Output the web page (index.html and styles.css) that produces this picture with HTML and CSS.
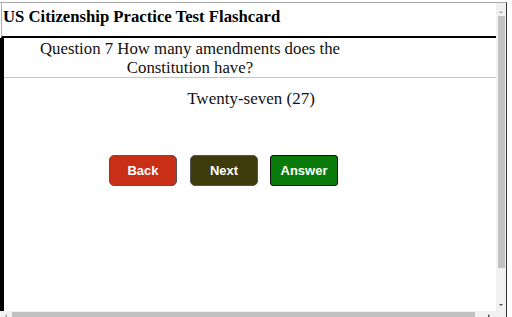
FILE: index.html
```html
<!DOCTYPE html>
<html>
<head>
<meta charset="utf-8">
<title>US Citizenship Practice Test Flashcard</title>
<link rel="stylesheet" href="styles.css">
</head>
<body>
<div class="frame">
  <div class="viewport">
    <header class="header">US Citizenship Practice Test Flashcard</header>
    <main class="card">
      <div class="question">Question 7 How many amendments does the Constitution have?</div>
      <div class="answer">Twenty-seven (27)</div>
      <div class="buttons">
        <button class="btn btn-back">Back</button>
        <button class="btn btn-next">Next</button>
        <button class="btn btn-answer">Answer</button>
      </div>
    </main>
  </div>
  <div class="vscroll">
    <span class="arrow arrow-up"></span>
    <span class="vthumb"></span>
    <span class="arrow arrow-down"></span>
  </div>
  <div class="hscroll">
    <span class="arrow arrow-left"></span>
    <span class="hthumb"></span>
    <span class="arrow arrow-right"></span>
  </div>
  <div class="corner"></div>
</div>
</body>
</html>
```
FILE: styles.css
```css
html, body {
  margin: 0;
  padding: 0;
  background: #fff;
  overflow: hidden;
  width: 512px;
  height: 317px;
}
.frame {
  margin-top: 2px;
  width: 507px;
  height: 320px;
  display: grid;
  grid-template-columns: 496px 10px;
  grid-template-rows: 308px 10px;
  border-top: 1px solid #a8a8a8;
  border-right: 1px solid #333;
  box-sizing: border-box;
}
.viewport {
  display: flex;
  flex-direction: column;
  overflow: hidden;
}
.header {
  height: 33px;
  margin-left: 1px;
  border-left: 1px solid #b0b0b0;
  padding-left: 1px;
  font-family: "Liberation Serif", "Times New Roman", serif;
  font-weight: bold;
  font-size: 16.7px;
  line-height: 27px;
  color: #000;
  border-bottom: 2px solid #000;
}
.card {
  flex: 1;
  border-left: 4px solid #000;
  font-family: "Liberation Serif", "Times New Roman", serif;
  color: #111;
}
.question {
  text-align: center;
  font-size: 16.8px;
  line-height: 19px;
  padding-top: 1px;
  height: 38px;
  border-bottom: 1px solid #c4c4c4;
  padding-right: 120px;
}
.answer {
  text-align: center;
  font-size: 17px;
  line-height: 20px;
  padding-top: 11px;
  padding-left: 2px;
}
.buttons {
  display: flex;
  gap: 13px;
  padding-left: 105px;
  margin-top: 46px;
}
.btn {
  width: 68px;
  height: 31px;
  border: 1px solid #555;
  border-radius: 5px;
  color: #fff;
  font-family: "Liberation Sans", Arial, sans-serif;
  font-weight: bold;
  font-size: 13px;
  padding: 0;
}
.btn-back { background: #c92f17; }
.btn-next { background: #3e3b0c; }
.btn-answer {
  background: #0a7a0b;
  border-color: #111;
  border-radius: 3px;
  margin-left: -1px;
}
.vscroll {
  background: #f1f1f1;
  display: flex;
  flex-direction: column;
  align-items: center;
  padding-top: 8px;
}
.vthumb {
  width: 7px;
  height: 252px;
  background: #c1c1c1;
  margin-top: 3px;
}
.hscroll {
  background: #f1f1f1;
  display: flex;
  align-items: flex-start;
  padding-top: 1px;
  padding-left: 5px;
}
.hthumb {
  width: 463px;
  height: 7px;
  background: #c1c1c1;
  margin-left: 5px;
}
.corner { background: #f1f1f1; }
.arrow {
  width: 0;
  height: 0;
  display: block;
}
.arrow-up {
  border-left: 2px solid transparent;
  border-right: 2px solid transparent;
  border-bottom: 2px solid #a3a3a3;
}
.arrow-down {
  margin-top: 36px;
  border-left: 2px solid transparent;
  border-right: 2px solid transparent;
  border-top: 2px solid #505050;
}
.arrow-left {
  margin-top: 2px;
  border-top: 2px solid transparent;
  border-bottom: 2px solid transparent;
  border-right: 2px solid #a3a3a3;
}
.arrow-right {
  margin-left: 13px;
  margin-top: 2px;
  border-top: 2px solid transparent;
  border-bottom: 2px solid transparent;
  border-left: 2px solid #505050;
}
```
